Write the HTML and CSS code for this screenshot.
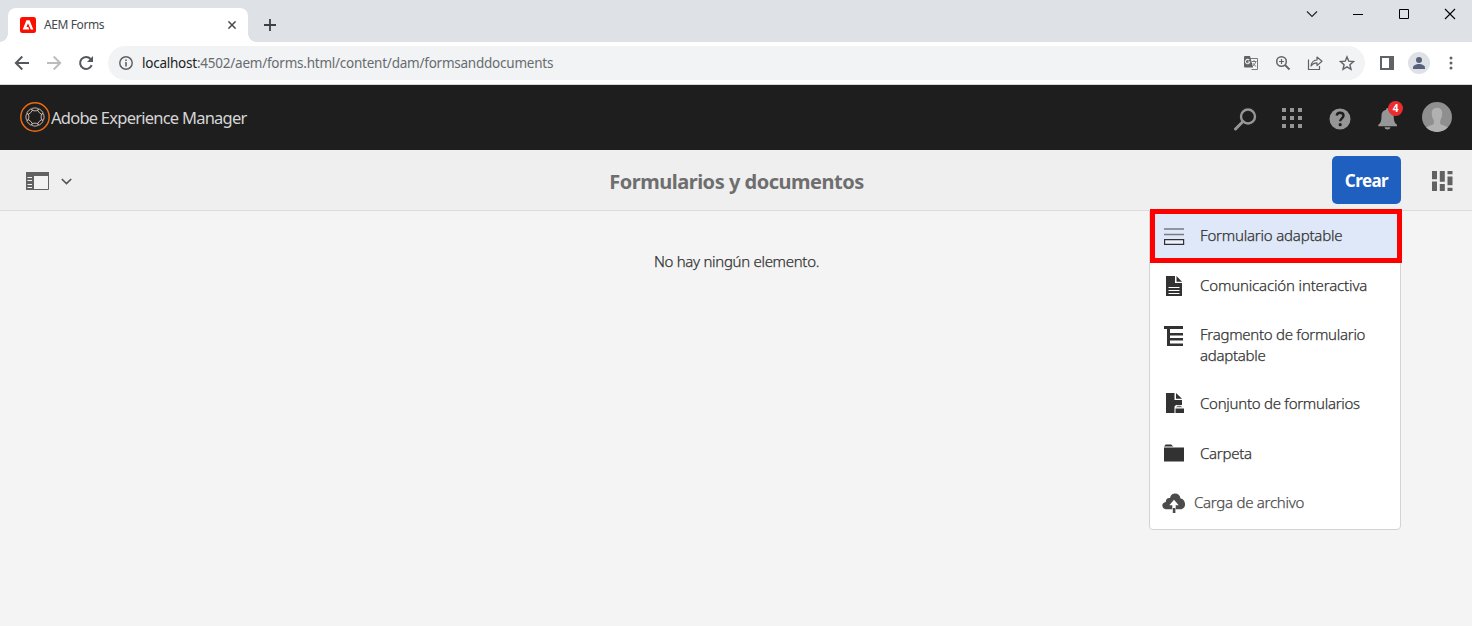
FILE: index.html
```html
<!DOCTYPE html>
<html lang="es">
<head>
<meta charset="utf-8">
<title>AEM Forms</title>
<link rel="stylesheet" href="styles.css">
</head>
<body>
<div class="window">
  <div class="tabstrip">
    <div class="tab">
      <svg class="favicon" width="16" height="16" viewBox="0 0 16 16"><rect width="16" height="16" rx="2.500" fill="#fa0f00"/><path d="M6.400 3.200h3.200L13.300 12.500H10.700L8 6.300 6.500 10h1.800l.9 2.500H2.700z" fill="#fff"/></svg>
      <span class="tab-title">AEM Forms</span>
      <svg class="tab-close" width="8" height="8" viewBox="0 0 8 8"><path d="M.4.4l7.200 7.200M7.600.4L.4 7.600" stroke="#45494d" stroke-width="1.500"/></svg>
    </div>
    <svg class="new-tab" width="12" height="12" viewBox="0 0 12 12"><path d="M6 0v12M0 6h12" stroke="#3c4043" stroke-width="1.800"/></svg>
    <div class="window-controls">
      <svg width="12" height="12" viewBox="0 0 12 12"><path d="M1 3.500l5 5 5-5" fill="none" stroke="#222" stroke-width="1.100"/></svg>
      <svg width="12" height="12" viewBox="0 0 12 12"><path d="M1 6.500h10" stroke="#000"/></svg>
      <svg width="12" height="12" viewBox="0 0 12 12"><path d="M1.500 1.500h9v9h-9z" fill="none" stroke="#000"/></svg>
      <svg width="12" height="12" viewBox="0 0 12 12"><path d="M1 1l10 10M11 1L1 11" stroke="#000" stroke-width="1.100"/></svg>
    </div>
  </div>
  <div class="toolbar">
    <svg class="nav" width="16" height="16" viewBox="0 0 16 16"><path d="M15 8H2M8.300 1.500L1.800 8l6.500 6.500" fill="none" stroke="#54585d" stroke-width="1.900"/></svg>
    <svg class="nav" width="16" height="16" viewBox="0 0 16 16"><path d="M1 8h13M7.700 1.500L14.200 8l-6.500 6.500" fill="none" stroke="#babcbe" stroke-width="1.900"/></svg>
    <svg class="nav" width="16" height="16" viewBox="0 0 16 16"><path d="M13.700 10.200A6 6 0 1 1 12.600 4" fill="none" stroke="#54585d" stroke-width="2"/><path d="M15 1v6H9z" fill="#54585d"/></svg>
    <div class="omnibox">
      <svg width="14" height="14" viewBox="0 0 14 14"><circle cx="7" cy="7" r="6.200" fill="none" stroke="#5f6368" stroke-width="1.500"/><path d="M6.200 6h1.600v4.500H6.200zM6.200 3.400h1.600V5H6.200z" fill="#5f6368"/></svg>
      <span class="url"><b>localhost</b>:4502/aem/forms.html/content/dam/formsanddocuments</span>
      <div class="page-actions">
        <svg width="16" height="16" viewBox="0 0 16 16"><path d="M7 3.500h7.500v11H8.500" fill="#f8f8f8" stroke="#777b7f"/><path d="M2 1h5l3.200 11.500H2a1 1 0 0 1-1-1V2a1 1 0 0 1 1-1z" fill="#5f6368"/><path d="M6.300 5.100A2.200 2.200 0 1 0 6.800 7H4.700" fill="none" stroke="#eee" stroke-width="1.100"/><path d="M8.800 6.500h4.700M11 5v1.500M12.700 6.600c-.4 2-1.500 3.400-2.500 4.200M10 8.200c.7 1.500 1.800 2.500 3.200 3.200" fill="none" stroke="#777b7f"/></svg>
        <svg width="16" height="16" viewBox="0 0 16 16"><circle cx="6.500" cy="6.500" r="4.800" fill="none" stroke="#5f6368" stroke-width="1.500"/><path d="M10 10l4.500 4.500" stroke="#5f6368" stroke-width="1.800"/><path d="M6.500 4v5M4 6.500h5" stroke="#5f6368" stroke-width="1.200"/></svg>
        <svg width="16" height="16" viewBox="0 0 16 16"><path d="M1.500 4.500v10h11V11" fill="none" stroke="#5f6368" stroke-width="1.200"/><path d="M4 11c.4-4 2.700-5.700 6-6V2l5 4.300-5 4.300V7.800C7.300 7.800 5.500 8.700 4 11z" fill="none" stroke="#5f6368" stroke-width="1.200" stroke-linejoin="round"/></svg>
        <svg width="16" height="16" viewBox="0 0 16 16"><path d="M8 1.900l1.800 4.300 4.700.4-3.600 3.100 1.100 4.600-4-2.500-4 2.500 1.100-4.600-3.600-3.100 4.700-.4z" fill="none" stroke="#5f6368" stroke-width="1.400"/></svg>
      </div>
    </div>
    <svg class="panel" width="14" height="14" viewBox="0 0 14 14"><path fill-rule="evenodd" d="M0 0h14v14H0zM2 2v10h7V2z" fill="#5f6368"/></svg>
    <svg class="profile" width="22" height="22" viewBox="0 0 22 22"><circle cx="11" cy="11" r="11" fill="#dee1e6"/><circle cx="11" cy="8" r="3" fill="#56627c"/><path d="M5 17v-1.500C5 13.300 8.500 12 11 12s6 1.300 6 3.500V17z" fill="#56627c"/></svg>
    <svg class="kebab" width="4" height="14" viewBox="0 0 4 14"><g fill="#5f6368"><circle cx="2" cy="2" r="1.500"/><circle cx="2" cy="7" r="1.500"/><circle cx="2" cy="12" r="1.500"/></g></svg>
  </div>
  <header class="header">
    <svg class="logo" width="30" height="30" viewBox="0 0 30 30"><circle cx="15" cy="15" r="14.200" fill="none" stroke="#eb6b12" stroke-width="1.500"/><g fill="none" stroke="#d8bfb2" stroke-width=".9"><g id="loops"><ellipse cx="15" cy="7.400" rx="3.400" ry="1.500"/><ellipse cx="15" cy="22.600" rx="3.400" ry="1.500"/><ellipse cx="7.400" cy="15" rx="1.500" ry="3.400"/><ellipse cx="22.600" cy="15" rx="1.500" ry="3.400"/></g><use href="#loops" transform="rotate(45 15 15)"/></g></svg>
    <span class="product">Adobe Experience Manager</span>
    <div class="header-actions">
      <svg width="24" height="24" viewBox="0 0 24 24"><circle cx="15" cy="9.500" r="7" fill="none" stroke="#969696" stroke-width="2.400"/><path d="M10 14.500L2.500 22" stroke="#969696" stroke-width="3" stroke-linecap="round"/></svg>
      <svg class="apps" width="20" height="20" viewBox="0 0 20 20"><path fill="#969696" d="M0 0h4v4H0zM8 0h4v4H8zM16 0h4v4h-4zM0 8h4v4H0zM8 8h4v4H8zM16 8h4v4h-4zM0 16h4v4H0zM8 16h4v4H8zM16 16h4v4h-4z"/></svg>
      <svg width="22" height="22" viewBox="0 0 22 22"><circle cx="11" cy="11" r="10.500" fill="#969696"/><path d="M7.700 7.500C8 5.600 9.300 4.700 11 4.700c2 0 3.500 1.100 3.500 3 0 2.500-3.300 2.800-3.300 5.600" fill="none" stroke="#1e1e1e" stroke-width="2.400"/><circle cx="11.200" cy="16.700" r="1.600" fill="#1e1e1e"/></svg>
      <div class="bell">
        <svg width="20" height="22" viewBox="0 0 20 22"><path d="M9.500 0c1 0 1.700.8 1.700 1.700 3.300.8 4.500 3.500 4.500 6.500 0 4.500 1 7 3.300 8.500v1.500H.3v-1.500c2.300-1.500 3.200-4 3.200-8.500 0-3 1.200-5.700 4.500-6.500C8 .8 8.600 0 9.500 0z" fill="#969696"/><path d="M6.500 19.300h6c-.5 3-5.500 3-6 0z" fill="#969696"/></svg>
        <span class="badge">4</span>
      </div>
      <svg class="avatar" width="30" height="30" viewBox="0 0 30 30"><defs><clipPath id="avatar"><circle cx="15" cy="15" r="15"/></clipPath></defs><g clip-path="url(#avatar)"><path fill="#8f8f8f" d="M0 0h30v30H0z"/><path d="M15 5.800c3.800 0 5.500 2.500 5.200 6-.3 3.200-1 5-2 6.500v3.500c1.500 1.700 5 1.700 7.800 3.700V31H4v-5.500c2.800-2 6.300-2 7.800-3.700v-3.500c-1-1.500-1.700-3.300-2-6.500-.3-3.500 1.400-6 5.200-6z" fill="#b1b1b1"/></g></svg>
    </div>
  </header>
  <div class="actionbar">
    <div class="rail-toggle">
      <svg width="24" height="18" viewBox="0 0 24 18"><path d="M.5.5h22v17H.5z" fill="#f3f3f3" stroke="#626262"/><path d="M0 0h23v4H0zM0 4h8v14H0z" fill="#626262"/><path d="M1.500 5.500H6M1.500 8.500H6M1.500 12.500H6M1.500 15.500H6" stroke="#f3f3f3" stroke-width="1"/></svg>
      <svg width="11" height="7" viewBox="0 0 11 7"><path d="M.8 1l4.700 4.600L10.200 1" fill="none" stroke="#555" stroke-width="1.700"/></svg>
    </div>
    <h1 class="title">Formularios y documentos</h1>
    <div class="create-group">
      <button class="create"><span>Crear</span></button>
      <svg class="view" width="21" height="20" viewBox="0 0 21 20"><path fill="#626262" d="M0 0h5v8.300H0zM0 10.500h5V20H0zM7.800 0h5v10.800h-5zM7.800 13h5v7h-5zM15.500 0h5v3.300h-5zM15.500 5.500h5v8.800h-5zM15.500 16.700h5V20h-5z"/></svg>
      <div class="menu">
        <div class="item selected"><svg width="22" height="20" viewBox="0 0 22 20"><path d="M1 2h20M1 7.500h20" stroke="#777b82" stroke-width="1.700"/><path d="M1.600 12.600h19v4.800h-19z" fill="#eef2fb" stroke="#323232" stroke-width="1.200"/></svg><span>Formulario adaptable</span></div>
        <div class="item wide"><svg width="22" height="20" viewBox="0 0 22 20"><path d="M3 0h9v7h7v13H3z" fill="#323232"/><path d="M13.500 0L19 5.700h-5.500z" fill="#323232"/><path d="M5.500 11.500h11M5.500 14.500h11M5.500 17.500h11" stroke="#fff"/></svg><span>Comunicación interactiva</span></div>
        <div class="item double"><svg width="22" height="20" viewBox="0 0 22 20"><path d="M1 0h19v3H7v4h13v2.500H7V12h13v2.500H7v3h13V20H4V3H1z" fill="#323232"/></svg><span>Fragmento de formulario adaptable</span></div>
        <div class="item set"><svg width="22" height="20" viewBox="0 0 22 20"><path d="M3 0h8.500v7H19v5h-6l-1.500 1.500V20H3z" fill="#323232"/><path d="M13 0l6 5.700h-6zM12.500 15.500h8.500V20h-8.500z" fill="#323232"/><path d="M13 14.200l1.500-1.500h3.500l1 1.500z" fill="#777"/></svg><span>Conjunto de formularios</span></div>
        <div class="item"><svg width="22" height="20" viewBox="0 0 22 20"><path d="M1 4.500h20v14H1zM1 3.500l1.700-2h5.500l2 2z" fill="#323232"/></svg><span>Carpeta</span></div>
        <div class="item upload"><svg width="24" height="20" viewBox="0 0 24 20"><path d="M5 16.300c-6 0-6-7-1.200-7.400C3.800 5.800 5.800 4.500 8 5c1-6 9.800-6 10.500.6 5.600.4 6.600 10.700-.2 10.700h-4.600v-4h3L12 6.800l-4.700 5.500h3v4z" fill="#4b4b4b"/><path d="M10.800 15h2.600v5.500h-2.600z" fill="#4b4b4b"/></svg><span>Carga de archivo</span></div>
      </div>
      <div class="highlight"></div>
    </div>
  </div>
  <main class="content"><p class="empty">No hay ningún elemento.</p></main>
</div>
</body>
</html>
```
FILE: styles.css
```css
* { box-sizing: border-box; }
body { margin: 0; font-family: "Noto Sans", sans-serif; color: #323232; }
svg { display: block; flex: none; }
.window { width: 1472px; height: 626px; display: flex; flex-direction: column; background: #f4f4f4; overflow: hidden; }
.tabstrip { height: 42px; flex: none; background: #dee1e6; display: flex; align-items: center; padding: 8px 16px 0 8px; }
.tab { position: relative; width: 240px; height: 34px; background: #fff; border-radius: 8px 8px 0 0; display: flex; align-items: center; padding: 0 12px; }
.tab::before, .tab::after { content: ""; position: absolute; bottom: 0; width: 8px; height: 8px; }
.tab::before { left: -8px; background: radial-gradient(circle at 0 0, transparent 7.500px, #fff 8px); }
.tab::after { right: -8px; background: radial-gradient(circle at 100% 0, transparent 7.500px, #fff 8px); }
.tab-title { font-size: 12px; margin: -1px 0 0 8px; flex: 1; color: #45494d; letter-spacing: -.4px; }
.new-tab { margin-left: 16px; }
.window-controls { margin-left: auto; display: flex; gap: 34px; padding-bottom: 22px; }
.toolbar { height: 43px; flex: none; background: #fff; border-bottom: 1px solid #d5d7d9; display: flex; align-items: center; padding: 0 19px 0 14px; }
.nav { margin-right: 16px; }
.omnibox { width: 1257px; height: 34px; margin-left: -2px; background: #f1f3f4; border-radius: 17px; display: flex; align-items: center; padding: 0 10px 0 11px; }
.url { font-size: 13.500px; margin: 0 0 0 9px; color: #686c70; letter-spacing: -.235px; }
.url b { font-weight: 400; color: #202124; }
.page-actions { margin-left: auto; display: flex; gap: 16px; }
.panel { margin-left: 15px; }
.profile { margin-left: 14px; }
.kebab { margin-left: auto; }
.header { height: 65px; flex: none; background: #1e1e1e; display: flex; align-items: center; padding: 0 20px 1px; }
.product { font-size: 16.500px; margin: 0 0 0 1px; color: #d6d6d6; letter-spacing: -.76px; }
.header-actions { margin-left: auto; display: flex; align-items: center; gap: 26px; padding-top: 4px; }
.apps { margin: -2px 1px 0 -1px; }
.bell { position: relative; left: 1px; }
.avatar { margin: -4px 0 0 -1px; }
.badge { position: absolute; left: 10px; top: -7px; width: 15px; height: 15px; border-radius: 50%; background: #ec2d2d; color: #fff; font-size: 10px; line-height: 14px; font-weight: 700; text-align: center; }
.actionbar { height: 61px; flex: none; background: #efefef; border-bottom: 1px solid #dcdcdc; display: grid; grid-template-columns: 1fr auto 1fr; align-items: center; padding: 0 19px 0 26px; }
.rail-toggle { display: flex; align-items: center; gap: 11px; padding-top: 2px; margin-right: 7px; }
.title { margin: 0 6px 0 0; padding-top: 3px; font-size: 20px; line-height: 30px; font-weight: 700; color: #6e6e6e; letter-spacing: -.49px; }
.create-group { position: relative; display: flex; align-items: center; justify-content: flex-end; gap: 31px; }
.create { width: 69px; height: 48px; border: 0; border-radius: 5px; background: #1f5fbf; color: #fff; padding: 0; font: 700 17px "Noto Sans", sans-serif; letter-spacing: -.55px; }
.view { margin-top: 2px; }
.menu { position: absolute; top: 54px; right: 52px; width: 252px; height: 320px; background: #fff; border: 1px solid #d3d3d3; border-radius: 0 0 4px 4px; }
.item { height: 49.400px; display: flex; align-items: center; padding-left: 13px; font-size: 15px; line-height: 21px; font-weight: 300; -webkit-text-stroke: .25px; }
.item span { margin-left: 15px; width: 185px; letter-spacing: -.27px; }
.item.selected { background: #dee8f8; height: 50px; }
.item.selected span { margin-top: -2px; letter-spacing: -.2px; }
.item.selected svg { margin-top: 2px; }
.item.wide span { letter-spacing: -.15px; }
.item.double { height: 69px; }
.item.double svg { margin-top: -18px; }
.item.set svg, .item.set span { margin-top: -2px; }
.item.upload { color: #4b4b4b; padding-left: 12px; }
.item.upload span { margin-left: 8px; }
.highlight { position: absolute; top: 53px; right: 51px; width: 252px; height: 54px; border: 5px solid #f00; }
.content { flex: 1; display: flex; justify-content: center; }
.empty { margin: 40px 0 0 1px; font-size: 15px; line-height: 21px; font-weight: 300; letter-spacing: -.3px; -webkit-text-stroke: .25px; }
```
